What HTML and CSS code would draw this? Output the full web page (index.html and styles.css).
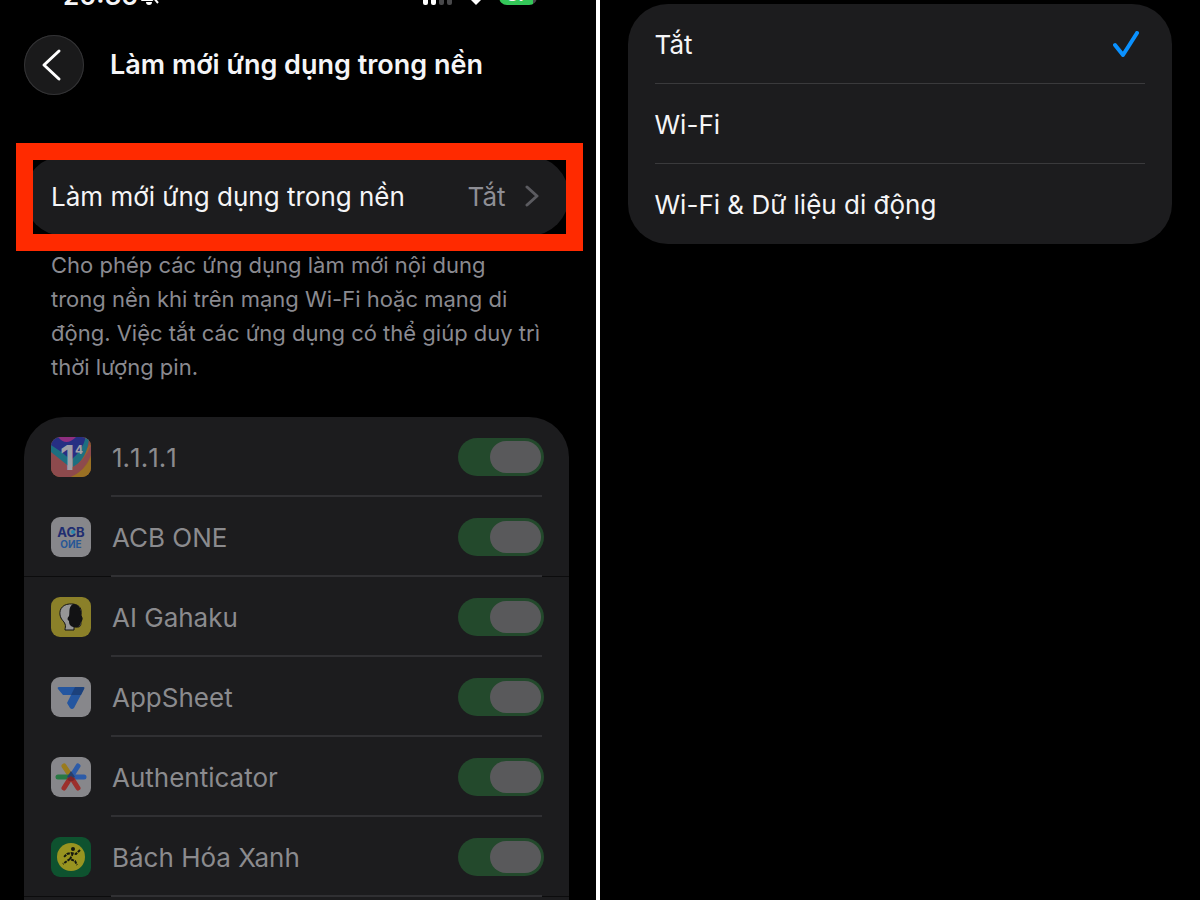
FILE: index.html
```html
<!DOCTYPE html>
<html lang="vi">
<head>
  <meta charset="UTF-8" />
  <meta name="viewport" content="width=device-width, initial-scale=1.0"/>
  <title>Làm mới ứng dụng trong nền</title>
  <link rel="stylesheet" href="styles.css">
</head>
<body>

  <main class="panes">

    <!-- Left: app list -->
    <section class="pane pane-apps">
      <div class="status-bar">
        <span class="status-time">20:36</span>
        <svg class="status-bell" width="20" height="22" viewBox="0 0 20 22">
          <path d="M2 18 C4 14 5 12 5 8 C5 4 7 3 10 3 C13 3 14 5 15 9 L15 18 Z M7 19 H13 C13 21 12 22 10 22 C8 22 7 21 7 19 Z" fill="#fff"/>
          <path d="M3 2 L18 19" stroke="#000" stroke-width="4"/>
          <path d="M4 2 L19 20" stroke="#fff" stroke-width="2"/>
        </svg>
        <svg class="status-signal" width="30" height="18" viewBox="0 0 30 18">
          <rect x="0" y="10" width="5" height="8" rx="2" fill="#fff"/>
          <rect x="8" y="7" width="5" height="11" rx="2" fill="#fff"/>
          <rect x="16" y="4" width="5" height="14" rx="2" fill="#48484a"/>
          <rect x="24" y="0" width="5" height="18" rx="2" fill="#48484a"/>
        </svg>
        <svg class="status-wifi" width="26" height="18" viewBox="0 0 26 18">
          <path d="M8 13 Q13 8 18 13 L13 18 Z" fill="#fff"/>
          <path d="M2 7 Q13 -3 24 7" fill="none" stroke="#fff" stroke-width="3"/>
        </svg>
        <span class="status-battery">87</span>
      </div>

      <header class="nav">
        <button class="back" type="button" aria-label="Quay lại">
          <svg width="60" height="60" viewBox="0 0 60 60">
            <path d="M35 16 L20 30 L35 44" fill="none" stroke="#fff" stroke-width="3" stroke-linecap="round" stroke-linejoin="round"/>
          </svg>
        </button>
        <h1>Làm mới ứng dụng trong nền</h1>
      </header>

      <div class="refresh">
        <button class="refresh-row" type="button">
          <span>Làm mới ứng dụng trong nền</span>
          <span class="value">Tắt</span>
          <svg width="14" height="22" viewBox="0 0 14 22">
            <path d="M2 2 L12 11 L2 20" fill="none" stroke="#5b5b60" stroke-width="3" stroke-linecap="round" stroke-linejoin="round"/>
          </svg>
        </button>
      </div>

      <p class="note">Cho phép các ứng dụng làm mới nội dung<br>trong nền khi trên mạng Wi-Fi hoặc mạng di<br>động. Việc tắt các ứng dụng có thể giúp duy trì<br>thời lượng pin.</p>

      <ul class="apps">
        <li>
          <svg class="icon" viewBox="0 0 40 40">
            <rect width="40" height="40" fill="#97622e"/>
            <path d="M0 0 H36 L34 12 L20 27 L0 12 Z" fill="#272f83"/>
            <path d="M7 0 Q15 10 25 0 Z" fill="#8f2f80"/>
            <path d="M34 0 H40 V6 L34 14 Z" fill="#8d4a48"/>
            <path d="M0 8 Q10 14 20 23 Q31 14 35 0 H38 Q37 22 20 32 Q10 26 0 18 Z" fill="#1d6f80"/>
            <path d="M0 15 L20 31 Q34 24 40 8 V18 Q34 34 20 40 H0 Z" fill="#8d4a4d"/>
            <path d="M40 20 V40 H20 Q34 34 40 20 Z" fill="#9a7024"/>
            <text class="one" x="9" y="33">1</text>
            <text class="four" x="24" y="17">4</text>
          </svg>
          <label class="digits" for="app-1">1.1.1.1</label>
          <input type="checkbox" id="app-1" checked disabled>
        </li>
        <li class="seam">
          <svg class="icon" viewBox="0 0 40 40">
            <rect width="40" height="40" fill="#87878b"/>
            <text class="acb" x="20" y="20" fill="#202d70">ACB</text>
            <text class="acb-one" x="20" y="31" fill="#275796">OИE</text>
            <circle cx="22" cy="15" r="2" fill="#2789b0"/>
          </svg>
          <label for="app-2">ACB ONE</label>
          <input type="checkbox" id="app-2" checked disabled>
        </li>
        <li>
          <svg class="icon" viewBox="0 0 40 40">
            <rect width="40" height="40" fill="#8b8029"/>
            <path d="M22 7 C12 6 8 12 9 18 C10 23 13 24 14 27 C15 29 14 31 14 33 H23 V30 H27 C30 30 30 27 30 25 L31 21 L30 18 C31 12 29 8 22 7 Z" fill="#969696" stroke="#151515" stroke-width="1"/>
            <path d="M22 7 C17 10 19 16 18 19 C16 21 16 23 18 24 C18 28 20 30 24 30 C29 31 29 28 30 25 C32 23 32 21 30 19 C31 12 28 7 22 7 Z" fill="#121214"/>
          </svg>
          <label for="app-3">AI Gahaku</label>
          <input type="checkbox" id="app-3" checked disabled>
        </li>
        <li>
          <svg class="icon" viewBox="0 0 40 40">
            <rect width="40" height="40" fill="#87878b"/>
            <path d="M8 10 H32 Q34 10 33 12 L23 31 Q21 33 19 31 L16 26 L20 18 H12 L7 12 Q6 10 8 10 Z" fill="#2456a0"/>
            <path d="M24 10 H32 Q34 10 33 12 L30 18 H20 Z" fill="#1c417c"/>
          </svg>
          <label for="app-4">AppSheet</label>
          <input type="checkbox" id="app-4" checked disabled>
        </li>
        <li>
          <svg class="icon" viewBox="0 0 40 40">
            <rect width="40" height="40" fill="#87878b"/>
            <g stroke-width="5" stroke-linecap="round" fill="none">
              <path d="M13 9 L19 18" stroke="#9a7b1d"/>
              <path d="M7 20 H18" stroke="#287843"/>
              <path d="M33 20 H21 M27 9 L20 20" stroke="#2c5ba8"/>
              <path d="M13 31 L20 20 L27 31" stroke="#9c302c"/>
            </g>
            <path d="M16 20 L20 14 L24 20 L20 22 Z" fill="#26406f"/>
            <path d="M16 22 L20 19 L24 22 L22 24 H18 Z" fill="#7c2529"/>
          </svg>
          <label for="app-5">Authenticator</label>
          <input type="checkbox" id="app-5" checked disabled>
        </li>
        <li class="seam">
          <svg class="icon" viewBox="0 0 40 40">
            <rect width="40" height="40" fill="#0e522f"/>
            <circle cx="20" cy="20" r="14" fill="#989420"/>
            <circle cx="22" cy="12" r="2" fill="#14180f"/>
            <path d="M29 13 L25 17 L20 16 L16 17 L13 20 M22 16 L19 22 L24 24 L26 28 M19 22 L16 24 L12 27" fill="none" stroke="#14180f" stroke-width="2" stroke-dasharray="3 1"/>
          </svg>
          <label for="app-6">Bách Hóa Xanh</label>
          <input type="checkbox" id="app-6" checked disabled>
        </li>
      </ul>
    </section>

    <!-- Right: refresh mode -->
    <section class="pane pane-mode">
      <div class="modes">
        <label class="mode">
          <span>Tắt</span>
          <input type="radio" name="mode" checked>
          <svg class="tick" width="26" height="26" viewBox="0 0 26 26">
            <path d="M2 14 L10 24 L24 2" fill="none" stroke="#0a91ff" stroke-width="4" stroke-linecap="round" stroke-linejoin="round"/>
          </svg>
        </label>
        <label class="mode">
          <span>Wi-Fi</span>
          <input type="radio" name="mode">
        </label>
        <label class="mode">
          <span>Wi-Fi &amp; Dữ liệu di động</span>
          <input type="radio" name="mode">
        </label>
      </div>
    </section>

  </main>
</body>
</html>
```
FILE: styles.css
```css
* {
  box-sizing: border-box;
  margin: 0;
  padding: 0;
}

body {
  background-color: #000;
  color: #f5f5f7;
  font-family: 'Inter', 'Roboto', sans-serif;
  font-size: 26px;
}

button {
  font: inherit;
  color: inherit;
  border: none;
  cursor: pointer;
}

.panes {
  display: flex;
  height: 100vh;
  overflow: hidden;
}

.pane {
  flex: 1 1 0;
  min-width: 0;
}

.pane-apps {
  border-right: 4px solid #fff;
  padding: 0 27px 0 24px;
}

/* status bar, scrolled almost out of view */
.status-bar {
  display: flex;
  align-items: flex-end;
  height: 5px;
  padding: 0 32px 0 39px;
  overflow: hidden;
}

.status-time {
  font-size: 26px;
  font-weight: 600;
  line-height: 18px;
}

.status-bell {
  margin-left: 1px;
}

.status-signal {
  margin-left: auto;
}

.status-wifi {
  margin: 0 10px;
}

.status-battery {
  width: 38px;
  height: 20px;
  border-radius: 8px;
  background: linear-gradient(to right, #34c759 90%, #48484a 90%);
  font-size: 18px;
  font-weight: 600;
  line-height: 20px;
  text-align: center;
}

.nav {
  display: flex;
  align-items: center;
  gap: 26px;
  margin-top: 30px;
}

.back {
  width: 60px;
  height: 60px;
  border-radius: 50%;
  background: #1a1a1b;
  box-shadow: inset 0 0 0 1px #333335;
}

.back svg {
  display: block;
}

h1 {
  font-size: 27px;
  font-weight: 600;
  line-height: 36px;
  white-space: nowrap;
}

.refresh {
  position: relative;
  margin-top: 61px;
}

/* red marker frame over the row */
.refresh::after {
  content: '';
  position: absolute;
  top: -13px;
  right: -14px;
  bottom: -15px;
  left: -8px;
  border: 17px solid #ff2a00;
  pointer-events: none;
}

.refresh-row {
  display: flex;
  align-items: center;
  width: 100%;
  height: 80px;
  padding: 0 30px 0 27px;
  border-radius: 40px;
  background: #1c1c1e;
  white-space: nowrap;
}

.value {
  margin-left: auto;
  margin-right: 19px;
  color: #8e8e95;
}

.note {
  margin: 12px 0 0 27px;
  color: #8a8a90;
  font-size: 22px;
  line-height: 34px;
  white-space: nowrap;
}

.apps {
  margin-top: 33px;
  padding-bottom: 80px;
  border-radius: 40px 40px 0 0;
  background: #1c1c1e;
  list-style: none;
}

.apps li {
  position: relative;
  display: flex;
  align-items: center;
  height: 80px;
  padding: 0 25px 0 27px;
}

.apps li::after {
  content: '';
  position: absolute;
  left: 87px;
  right: 27px;
  bottom: 0;
  height: 2px;
  background: #303033;
}

.apps .seam {
  box-shadow: inset 0 -1px #0c0c0d;
}

.icon {
  width: 40px;
  height: 40px;
  margin-right: 21px;
  border-radius: 9px;
}

.icon text {
  font-weight: 700;
}

.one {
  fill: #a0a0a8;
  font-size: 34px;
}

.four {
  fill: #a0a0a8;
  font-size: 12px;
}

.acb {
  font-size: 13px;
  text-anchor: middle;
}

.acb-one {
  font-size: 10px;
  text-anchor: middle;
}

.apps label {
  flex: 1;
  color: #8b8b8e;
}

.apps .digits {
  font-kerning: none;
}

.apps input {
  appearance: none;
  width: 86px;
  height: 38px;
  padding: 3px;
  border-radius: 19px;
  background: #23492c;
}

.apps input::before {
  content: '';
  display: block;
  width: 51px;
  height: 32px;
  margin-left: auto;
  border-radius: 16px;
  background: #59595b;
}

.pane-mode {
  padding: 4px 28px 0;
}

.modes {
  border-radius: 40px;
  background: #1c1c1e;
}

.mode {
  position: relative;
  display: flex;
  align-items: center;
  height: 80px;
  padding: 0 33px 0 27px;
}

.mode + .mode::before {
  content: '';
  position: absolute;
  top: -1px;
  left: 27px;
  right: 27px;
  height: 1px;
  background: #3a3a3c;
}

.mode span {
  flex: 1;
}

.mode input {
  appearance: none;
}

.tick {
  display: none;
}

.mode input:checked + .tick {
  display: block;
}
```
